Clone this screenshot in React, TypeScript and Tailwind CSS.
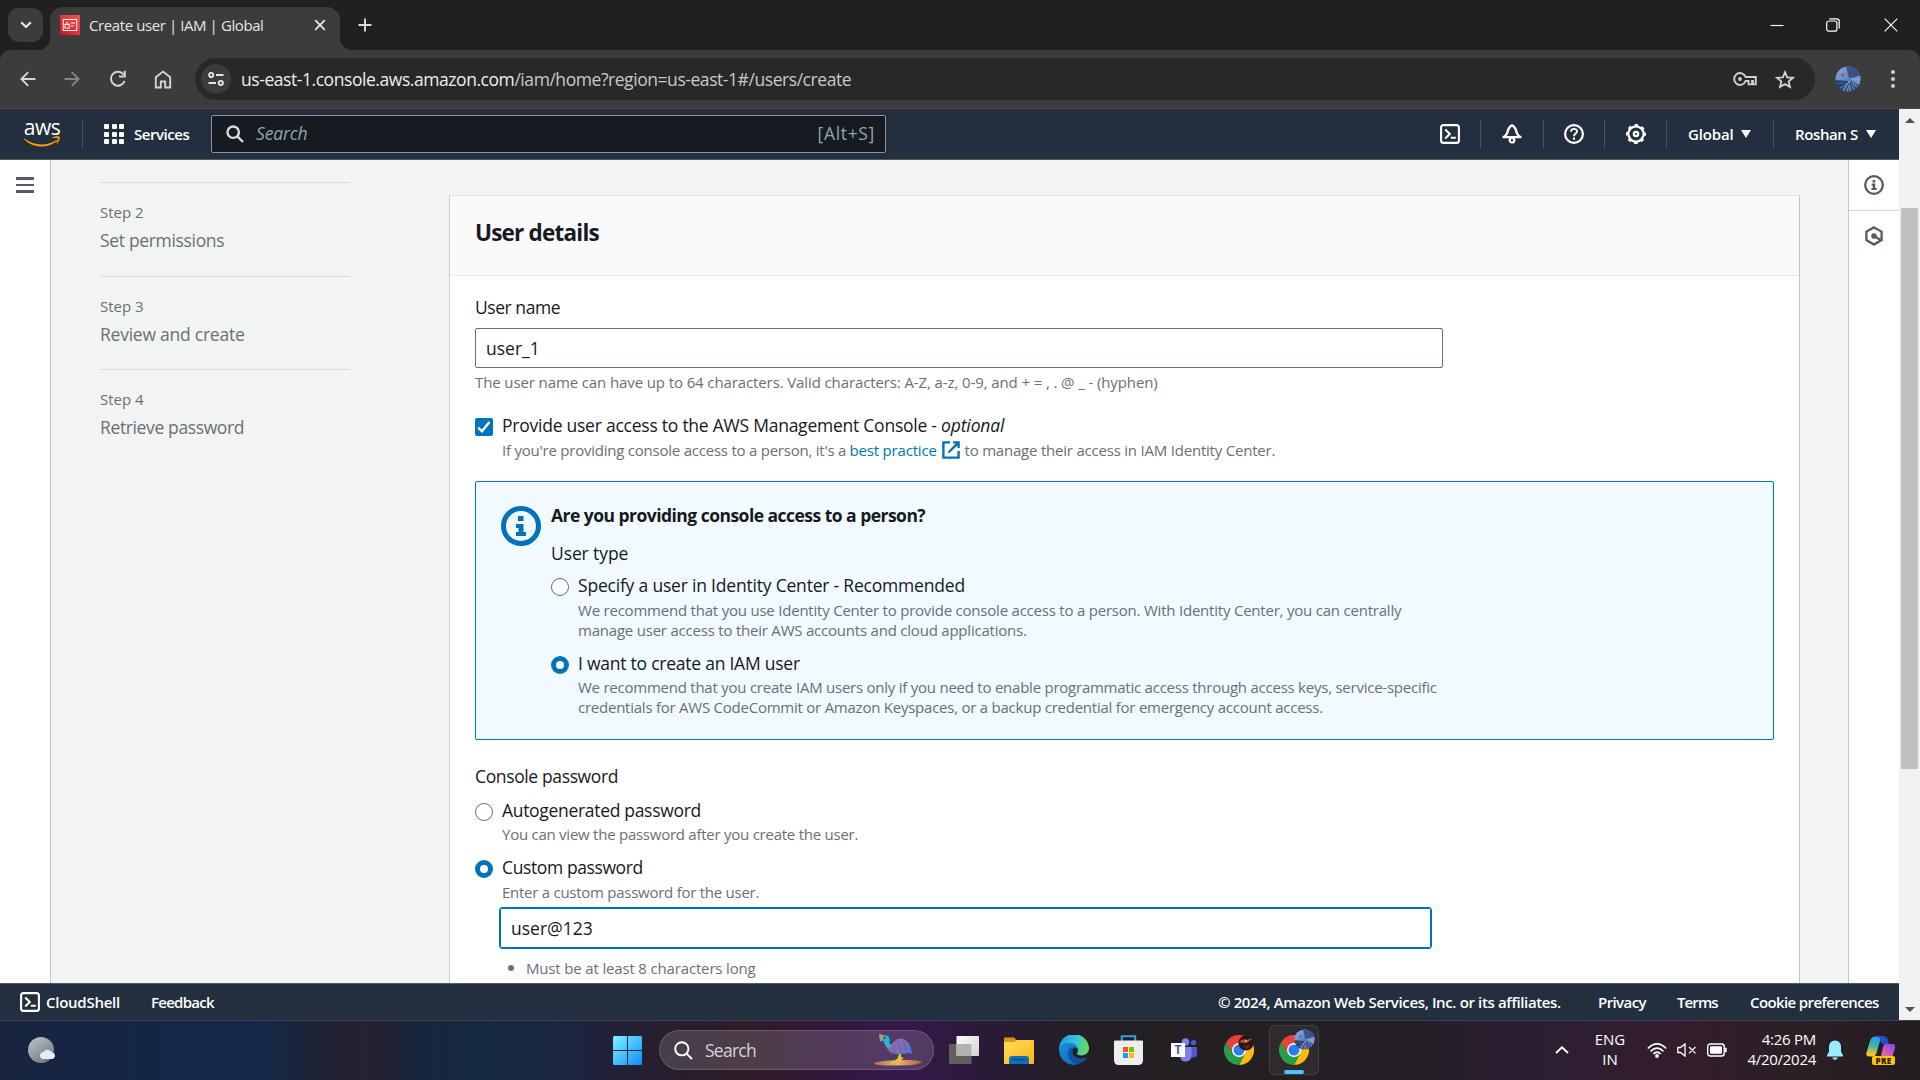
import React from "react";
import type { ReactNode } from "react";

/* ---------- browser chrome ---------- */

function Avatar({ className, id }: { className: string; id: string }) {
  return (
    <svg viewBox="0 0 26 26" className={className}>
      <defs>
        <clipPath id={id}><circle cx="13" cy="13" r="12.5" /></clipPath>
        <linearGradient id={id + "g"} x1="0" y1="0" x2="1" y2="1">
          <stop offset="0" stopColor="#8fb2e6" />
          <stop offset="0.5" stopColor="#5f82bd" />
          <stop offset="1" stopColor="#2c4272" />
        </linearGradient>
      </defs>
      <g clipPath={`url(#${id})`}>
        <rect width="26" height="26" fill={`url(#${id}g)`} />
        <path d="M11 0 L26 0 L26 11 L14 12 Z" fill="#3a5287" />
        <path d="M15 13 L26 9 L26 20 Z" fill="#7698cf" />
        <path d="M0 14 L13 15 L6 26 L0 26 Z" fill="#2a3f6e" />
        <path d="M14 16 L3 18 M14 16 L5 22 M14 16 L8 25 M14 16 L12 26 M14 16 L16 26 M14 16 L20 25 M14 16 L24 22 M16 13 L25 14" stroke="#8fb0e0" strokeWidth="0.6" />
        <path d="M13 16 L1 20 M14 17 L10 26 M15 17 L18 26 M15 16 L22 24" stroke="#1c2d57" strokeWidth="0.9" />
        <circle cx="7.5" cy="9" r="1.4" fill="#a24a48" />
      </g>
    </svg>
  );
}

function TabStrip() {
  return (
    <div className="flex h-[50px] items-end bg-[#1f2120]">
      <button className="relative z-10 mb-2 ml-2 flex h-[34px] w-[35px] items-center justify-center rounded-[11px] bg-[#3c3c3c]">
        <svg viewBox="0 0 12 8" className="h-2 w-3" fill="none" stroke="#e8e8e8" strokeWidth="2.2"><path d="M1.2 1.2 L6 6 L10.8 1.2" /></svg>
      </button>
      <div className="-ml-[5px] h-3 w-3 bg-[#3c3c3c]"><div className="h-3 w-3 rounded-br-[12px] bg-[#1f2120]" /></div>
      <div className="flex h-[43px] w-[290px] items-center rounded-t-[13px] bg-[#3c3c3c] pl-[10px]">
        <svg viewBox="0 0 20 20" className="-mt-[7px] h-5 w-5">
          <defs><linearGradient id="fav" x1="0" y1="1" x2="1" y2="0"><stop stopColor="#c7131f" /><stop offset="1" stopColor="#ff5252" /></linearGradient></defs>
          <rect width="20" height="20" fill="url(#fav)" />
          <g fill="none" stroke="#fff" strokeWidth="1">
            <rect x="3.2" y="4.5" width="13.6" height="11" />
            <rect x="5" y="9.5" width="4.2" height="3.6" />
            <path d="M5.9 9.5 V8 Q7.1 6.2 8.3 8 V9.5 M10.8 8 H15 M10.8 11 H13.5" />
          </g>
        </svg>
        <span className="-mt-[7px] ml-[9px] w-[176px] whitespace-nowrap text-[15px] font-medium leading-5 tracking-[-0.41px] text-[#e6e6e6]">Create user | IAM | Global</span>
        <svg viewBox="0 0 12 12" className="-mt-[7px] ml-[49px] h-3 w-3" stroke="#e3e3e3" strokeWidth="1.9"><path d="M1.2 1.2 L10.8 10.8 M10.8 1.2 L1.2 10.8" /></svg>
      </div>
      <div className="h-3 w-3 bg-[#3c3c3c]"><div className="h-3 w-3 rounded-bl-[12px] bg-[#1f2120]" /></div>
      <svg viewBox="0 0 14 14" className="mb-[18px] ml-[6px] h-[14px] w-[14px]" stroke="#dcdcdc" strokeWidth="1.9"><path d="M7 0.5 V13.5 M0.5 7 H13.5" /></svg>
      <div className="mb-[18px] ml-auto mr-[22px] flex items-center">
        <svg viewBox="0 0 14 14" className="h-[14px] w-[14px]" stroke="#fff" strokeWidth="1.1"><path d="M0.5 7.5 H13.5" /></svg>
        <svg viewBox="0 0 14 14" className="ml-[42px] h-[14px] w-[14px]" fill="none" stroke="#fff" strokeWidth="1.2"><rect x="0.7" y="3" width="10.2" height="10.2" rx="2" /><path d="M3.4 0.8 H10.6 Q13.2 0.8 13.2 3.4 V10.6" /></svg>
        <svg viewBox="0 0 14 14" className="ml-[44px] h-[14px] w-[14px]" stroke="#fff" strokeWidth="1.1"><path d="M0.7 0.7 L13.3 13.3 M13.3 0.7 L0.7 13.3" /></svg>
      </div>
    </div>
  );
}

function Toolbar() {
  return (
    <div className="bg-[#1f2120]">
      <div className="flex h-[59px] items-center rounded-t-[10px] border-b border-[#4b4a48] bg-[#3c3c3c]">
        <svg viewBox="0 0 16 16" className="ml-5 h-4 w-4" fill="none" stroke="#d6d6d6" strokeWidth="1.9"><path d="M15.5 8 H1.5 M8.2 1.2 L1.4 8 L8.2 14.8" /></svg>
        <svg viewBox="0 0 16 16" className="ml-[28px] h-4 w-4" fill="none" stroke="#858585" strokeWidth="1.9"><path d="M0.5 8 H14.5 M7.8 1.2 L14.6 8 L7.8 14.8" /></svg>
        <svg viewBox="0 0 18 18" className="ml-[29px] h-[18px] w-[18px]" fill="none" stroke="#d6d6d6" strokeWidth="2"><path d="M15.6 11 A7 7 0 1 1 14.8 4.8" /><path d="M15.8 0.8 V6.4 H10" /></svg>
        <svg viewBox="0 0 18 19" className="ml-[27px] h-[19px] w-[18px]" fill="none" stroke="#d6d6d6" strokeWidth="1.9"><path d="M1.8 17.5 V7.3 L9 1.6 L16.2 7.3 V17.5 H11.2 V11.5 H6.8 V17.5 Z" /></svg>
        <div className="ml-[23px] flex h-[42px] w-[1620px] items-center rounded-full bg-[#282828] pl-[6px]">
          <div className="flex h-[30px] w-[30px] items-center justify-center rounded-full bg-[#3c3c3c]">
            <svg viewBox="0 0 16 14" className="h-[14px] w-4" fill="none" stroke="#e6e6e6" strokeWidth="1.9"><circle cx="3.2" cy="3" r="2.1" /><path d="M8 3 H15.5 M0.5 11 H8" /><circle cx="12.8" cy="11" r="2.1" /></svg>
          </div>
          <div className="ml-[10px] whitespace-nowrap text-[17.5px] leading-6 tracking-[-0.44px] text-[#c9c9c9]"><span className="text-[#eeeeee]">us-east-1.console.aws.amazon.com</span>/iam/home?region=us-east-1#/users/create</div>
          <svg viewBox="0 0 24 14" className="ml-auto h-[14px] w-6" fill="none" stroke="#cfcfcf" strokeWidth="1.9"><path d="M12.6 5 A5.9 5.9 0 1 0 12.6 9 H15.6 V12.4 H19 V9 H20 V12.4 H22.8 V5 Z" /><circle cx="7" cy="7" r="1.9" fill="#cfcfcf" stroke="none" /></svg>
          <svg viewBox="0 0 20 19" className="ml-[18px] mr-5 h-[19px] w-5" fill="none" stroke="#d5d5d5" strokeWidth="1.8"><path d="M10 2.2 L12.2 7.3 L18 7.8 L13.6 11.5 L15 17 L10 14.1 L5 17 L6.4 11.5 L2 7.8 L7.8 7.3 Z" /></svg>
        </div>
        <Avatar id="av1" className="ml-5 h-[26px] w-[26px]" />
        <div className="ml-[30px] flex flex-col gap-[3px]">
          <i className="h-1 w-1 rounded-full bg-[#cfcfcf]" /><i className="h-1 w-1 rounded-full bg-[#cfcfcf]" /><i className="h-1 w-1 rounded-full bg-[#cfcfcf]" />
        </div>
      </div>
    </div>
  );
}

/* ---------- console header and footer ---------- */

function ShellIcon() {
  return (
    <svg viewBox="0 0 20 20" className="h-5 w-5" fill="none" stroke="#fff" strokeWidth="2.1"><rect x="1.1" y="1.1" width="17.8" height="17.8" rx="2.5" /><path d="M5.2 5.4 L9.8 10 L5.2 14.6 M10.8 13.7 H15.8" /></svg>
  );
}

function Divider({ className }: { className: string }) {
  return <div className={"h-7 w-px bg-[#4a535f] " + className} />;
}

function Header() {
  return (
    <header className="flex h-[51px] items-center border-b border-[#545b64] bg-[#232f3e] font-semibold text-white">
      <div className="-mt-[3px] ml-[22px] flex w-10 flex-col items-center">
        <span className="h-[19px] text-[21px] font-medium leading-[17px] tracking-[-0.4px]">aws</span>
        <svg viewBox="0 0 40 12" className="-mt-[2px] h-[11px] w-10"><path d="M0.6 2.4 C11 11 26 11 35.4 4.6 C36.4 4.2 37 5 36.2 5.8 C26 14.2 9.5 13.2 0.6 3.6 Z" fill="#ff9900" /><path d="M31.4 1.6 C34 0 38.6 0 39.3 0.9 C39.8 1.9 38.8 6.2 36.6 8.2 C36 8.6 35.8 8.2 36 7.6 C36.6 6 37.6 3.4 37 2.6 C36.4 1.9 33.6 2.2 32 2.3 C31.2 2.4 31 2 31.4 1.6 Z" fill="#ff9900" /></svg>
      </div>
      <Divider className="ml-[20px]" />
      <div className="ml-[21px] grid grid-cols-3 gap-x-[2.5px] gap-y-[2.5px]">
        {Array.from({ length: 9 }, (_, i) => <i key={i} className="h-[5px] w-[5px] rounded-[1px] bg-white" />)}
      </div>
      <span className="ml-[10px] w-[56px] text-[15px] leading-5 tracking-[-0.45px]">Services</span>
      <div className="ml-[21px] flex h-[38px] w-[675px] items-center rounded-[2px] border border-[#879596] bg-[#161a21] pl-[14px] pr-[10px] text-[17.5px] font-normal text-[#95a5a6]">
        <svg viewBox="0 0 18 18" className="h-[18px] w-[18px]" fill="none" stroke="#d9dcdc" strokeWidth="2.4"><circle cx="7.2" cy="7.2" r="5.7" /><path d="M11.4 11.4 L17 17" /></svg>
        <span className="-mt-0.5 ml-3 italic leading-6 tracking-[-0.15px]">Search</span>
        <span className="-mt-0.5 ml-auto leading-6 tracking-[0.66px]">[Alt+S]</span>
      </div>
      <div className="ml-auto"><ShellIcon /></div>
      <Divider className="ml-[20px]" />
      <svg viewBox="0 0 20 20" className="ml-[21px] h-5 w-5" fill="none" stroke="#fff" strokeWidth="2.2" strokeLinejoin="round"><path d="M10 1.2 C12.5 2.5 13.8 4.5 14.2 7 C14.6 10 16 11.5 18.6 13.2 H1.4 C4 11.5 5.4 10 5.8 7 C6.2 4.5 7.5 2.5 10 1.2 Z" /><circle cx="10" cy="16.2" r="2.3" fill="#232f3e" /></svg>
      <Divider className="ml-[21px]" />
      <svg viewBox="0 0 20 20" className="ml-[20px] h-5 w-5" fill="none" stroke="#fff" strokeWidth="2.2"><circle cx="10" cy="10" r="8.9" /><path d="M7 7.8 C7 4 13 4 13 7.6 C13 9.6 10 9.6 10 12.2 M10 13.5 V15.8" strokeWidth="1.9" /></svg>
      <Divider className="ml-[20px]" />
      <svg viewBox="0 0 20 20" className="ml-[21px] h-5 w-5" fill="none" stroke="#fff"><circle cx="10" cy="10" r="7.6" strokeWidth="2.2" /><circle cx="10" cy="10" r="9" strokeWidth="2" strokeDasharray="3.53 3.54" strokeDashoffset="1.76" /><circle cx="10" cy="10" r="2.2" strokeWidth="2.2" /></svg>
      <Divider className="ml-[20px]" />
      <span className="ml-[21px] w-[45px] text-[15px] leading-5 tracking-[-0.15px]">Global</span>
      <svg viewBox="0 0 10 8" className="ml-[8px] h-2 w-[10px]" fill="#fff"><path d="M0 0 H10 L5 8 Z" /></svg>
      <Divider className="ml-[22px]" />
      <span className="ml-[21px] w-[63px] whitespace-nowrap text-[15px] leading-5 tracking-[-0.38px]">Roshan S</span>
      <svg viewBox="0 0 10 8" className="ml-[8px] mr-[23px] h-2 w-[10px]" fill="#fff"><path d="M0 0 H10 L5 8 Z" /></svg>
    </header>
  );
}

function Footer() {
  return (
    <footer className="flex h-[37px] items-center whitespace-nowrap border-t border-[#545b64] bg-[#232f3e] text-[15px] font-semibold leading-5 text-white">
      <div className="ml-5"><ShellIcon /></div>
      <span className="ml-[6px] w-[74px] tracking-[-0.26px]">CloudShell</span>
      <span className="ml-[31px] tracking-[-0.73px]">Feedback</span>
      <span className="ml-auto w-[344px] tracking-[-0.36px]">© 2024, Amazon Web Services, Inc. or its affiliates.</span>
      <span className="ml-[36px] w-[49px] tracking-[-0.59px]">Privacy</span>
      <span className="ml-[30px] w-[42px] tracking-[-0.9px]">Terms</span>
      <span className="ml-[31px] mr-[20px] w-[129px] tracking-[-0.61px]">Cookie preferences</span>
    </footer>
  );
}

/* ---------- page ---------- */

function Step({ n, children }: { n: number; children: ReactNode }) {
  return (
    <div className="h-[93.5px] border-t border-[#d5dbdb] pt-[19px] text-[#687078]">
      <div className="text-[15px] leading-5">Step {n}</div>
      <div className="mt-[6px] text-[17.5px] leading-[25px]">{children}</div>
    </div>
  );
}

function Radio({ on }: { on?: boolean }) {
  return on ? (
    <span className="mt-[5px] h-[18px] w-[18px] shrink-0 rounded-full border-[5px] border-[#0073bb] bg-white" />
  ) : (
    <span className="mt-[5px] h-[18px] w-[18px] shrink-0 rounded-full border border-[#687078] bg-white" />
  );
}

function Option({ control, label, children }: { control: ReactNode; label: ReactNode; children: ReactNode }) {
  return (
    <div className="flex gap-[9px] whitespace-nowrap">
      {control}
      <div>
        <div className="text-[17.5px] leading-[25px] text-[#16191f]">{label}</div>
        <div className="text-[15px] leading-5 text-[#687078]">{children}</div>
      </div>
    </div>
  );
}

function InfoBox() {
  return (
    <div className="mt-[21px] flex h-[259px] w-[1299px] rounded-[2px] border border-[#0073bb] bg-[#f1faff] pl-[25px] pt-[21px]">
      <svg viewBox="0 0 40 40" className="mt-[3px] h-10 w-10" fill="#0073bb"><circle cx="20" cy="20" r="17.5" fill="none" stroke="#0073bb" strokeWidth="5" /><path d="M17 10 H22.5 V15 H17 Z M15 18 H22.5 V26 H25 V30 H15 V26 H17.5 V22 H15 Z" /></svg>
      <div className="ml-[10px] whitespace-nowrap text-[17.5px] leading-[25px] text-[#16191f]">
        <div className="font-bold tracking-[-0.53px]">Are you providing console access to a person?</div>
        <div className="mt-[13px] tracking-[-0.1px]">User type</div>
        <div className="mt-[7px]">
          <Option control={<Radio />} label={<span className="tracking-[-0.2px]">Specify a user in Identity Center - Recommended</span>}>
            <div className="mt-[2px] tracking-[-0.215px]">We recommend that you use Identity Center to provide console access to a person. With Identity Center, you can centrally<br />manage user access to their AWS accounts and cloud applications.</div>
          </Option>
        </div>
        <div className="mt-[11px]">
          <Option control={<Radio on />} label={<span className="tracking-[-0.24px]">I want to create an IAM user</span>}>
            <div className="mt-px tracking-[-0.24px]">We recommend that you create IAM users only if you need to enable programmatic access through access keys, service-specific<br />credentials for AWS CodeCommit or Amazon Keyspaces, or a backup credential for emergency account access.</div>
          </Option>
        </div>
      </div>
    </div>
  );
}

function UserDetails() {
  return (
    <section className="ml-[99px] mt-[35px] h-[800px] w-[1351px] border border-[#e3e6e6] border-l-[#c9d0d0] border-r-[#bfc7c7] bg-white">
      <div className="h-[80px] border-b border-[#eaeded] bg-[#fafafa] pl-[25px] pt-[22px]">
        <h2 className="text-[22.5px] font-bold leading-[30px] tracking-[-0.79px] text-[#16191f]">User details</h2>
      </div>
      <div className="whitespace-nowrap pl-[25px] pt-[19px] text-[17.5px] leading-[25px] text-[#16191f]">
        <div className="tracking-[-0.45px]">User name</div>
        <div className="mt-2 flex h-10 w-[968px] items-center rounded-[2px] border border-[#687078] pl-[10px]">user_1</div>
        <div className="mt-1 text-[15px] leading-5 tracking-[-0.11px] text-[#687078]">The user name can have up to 64 characters. Valid characters: A-Z, a-z, 0-9, and + = , . @ _ - (hyphen)</div>
        <div className="mt-[21px]">
          <Option
            control={
              <span className="mt-[5px] flex h-[18px] w-[18px] shrink-0 items-center justify-center rounded-[2px] bg-[#0073bb]">
                <svg viewBox="0 0 14 14" className="h-[14px] w-[14px]" fill="none" stroke="#fff" strokeWidth="2.4"><path d="M1.2 7.6 L5 11.2 L12.4 2" /></svg>
              </span>
            }
            label={<><span className="tracking-[-0.24px]">Provide user access to the AWS Management Console - </span><i className="tracking-[-0.14px]">optional</i></>}
          >
            <div className="mt-[2px] flex h-5 items-center tracking-[-0.23px]">
              <span className="w-[347.5px]">If you're providing console access to a person, it's a</span>
              <a className="w-[92px] tracking-[-0.18px] text-[#0073bb]">best practice</a>
              <svg viewBox="0 0 18 18" className="h-[18px] w-[18px]" fill="none" stroke="#0073bb" strokeWidth="2.4"><path d="M8 1.4 H1.4 V16.6 H16.6 V10 M11 1.4 H16.6 V7 M16.4 1.6 L6.5 11.5" /></svg>
              <span className="ml-[5px] tracking-[-0.21px]">to manage their access in IAM Identity Center.</span>
            </div>
          </Option>
        </div>
        <InfoBox />
        <div className="mt-6 tracking-[-0.37px]">Console password</div>
        <div className="mt-[9px]">
          <Option control={<Radio />} label={<span className="tracking-[-0.31px]">Autogenerated password</span>}>
            <div className="mt-px tracking-[-0.25px]">You can view the password after you create the user.</div>
          </Option>
        </div>
        <div className="mt-[11px]">
          <Option control={<Radio on />} label={<span className="tracking-[-0.39px]">Custom password</span>}>
            <div className="mt-[2px] tracking-[-0.26px]">Enter a custom password for the user.</div>
          </Option>
        </div>
        <div className="ml-[25px] mt-[6px] flex h-[40px] w-[931px] items-center rounded-[2px] border border-[#0073bb] bg-white pl-[10px] outline-[1.5px] outline-[#0073bb]">user@123</div>
        <ul className="ml-[50px] mt-[10px] list-none text-[15px] leading-5 tracking-[-0.16px] text-[#687078]">
          <li className="flex items-center"><i className="-ml-[17px] mr-3 h-[6px] w-[6px] rounded-full bg-[#687078]" />Must be at least 8 characters long</li>
        </ul>
      </div>
    </section>
  );
}

function Page() {
  return (
    <main className="flex h-[823px] overflow-hidden bg-[#f2f3f3]">
      <div className="w-[51px] border-r border-[#bfc8c8] bg-white pl-[16px] pt-[17px]">
        <div className="flex flex-col gap-[4px]">
          <i className="h-[2.5px] w-[18px] bg-[#545b64]" /><i className="h-[2.5px] w-[18px] bg-[#545b64]" /><i className="h-[2.5px] w-[18px] bg-[#545b64]" />
        </div>
      </div>
      <nav className="ml-[49px] w-[250px] pt-[22px]">
        <Step n={2}><span className="tracking-[-0.33px]">Set permissions</span></Step>
        <Step n={3}><span className="tracking-[-0.24px]">Review and create</span></Step>
        <Step n={4}><span className="tracking-[-0.37px]">Retrieve password</span></Step>
      </nav>
      <UserDetails />
      <aside className="ml-auto w-[51px] border-l border-[#c3cbcb] bg-white">
        <div className="flex h-[51px] items-center justify-center border-b border-[#cdd5d5]">
          <svg viewBox="0 0 20 20" className="h-5 w-5" fill="#545b64"><circle cx="10" cy="10" r="8.8" fill="none" stroke="#545b64" strokeWidth="2.3" /><path d="M8.6 5 H11.2 V7.4 H8.6 Z M7.6 8.6 H11.2 V13 H12.6 V15 H7.4 V13 H8.8 V10.6 H7.6 Z" /></svg>
        </div>
        <div className="flex h-[49px] items-center justify-center">
          <svg viewBox="0 0 20 20" className="h-5 w-5" fill="none" stroke="#545b64" strokeWidth="2.3"><path d="M10 1.4 L17.6 5.6 V14 L10 18.6 L2.4 14 V5.6 Z" /><circle cx="10" cy="10" r="2.8" fill="#545b64" stroke="none" /><path d="M10 10 L17 14.2" /></svg>
        </div>
      </aside>
    </main>
  );
}

function Scrollbar() {
  return (
    <div className="flex h-[911px] w-[21px] flex-col items-center bg-[#f1f1f1]">
      <svg viewBox="0 0 10 5" className="mt-[9px] h-[5px] w-[10px] shrink-0" fill="#505050"><path d="M5 0 L10 5 H0 Z" /></svg>
      <div className="mt-[85px] h-[561px] w-[17px] shrink-0 bg-[#c1c1c1]" />
      <svg viewBox="0 0 10 5" className="mb-[8px] mt-auto h-[5px] w-[10px] shrink-0" fill="#505050"><path d="M0 0 H10 L5 5 Z" /></svg>
    </div>
  );
}

/* ---------- taskbar ---------- */

function Bird() {
  return (
    <svg viewBox="0 0 50 32" className="h-8 w-[50px] shrink-0">
      <defs>
        <linearGradient id="bd" x1="0" y1="0" x2="1" y2="1"><stop stopColor="#6f6fd0" /><stop offset="0.5" stopColor="#8d6a9e" /><stop offset="1" stopColor="#3f7fe0" /></linearGradient>
        <linearGradient id="sd" x1="0" y1="0" x2="1" y2="0"><stop stopColor="#b9713f" /><stop offset="0.5" stopColor="#eab07a" /><stop offset="1" stopColor="#a8643c" /></linearGradient>
      </defs>
      <path d="M1 29 C10 25.5 42 25 49 27.5 C48 31 36 31.5 22 31.5 C10 31.5 0 31 1 29 Z" fill="url(#sd)" />
      <path d="M27 20 L25.5 25 L18 30 M27 20 L27 26 L24.5 29.5 M26 25 L30 24" stroke="#e8c62c" strokeWidth="2" fill="none" />
      <path d="M14 11 C18 14 20 6 26 4.5 C34 4 38 10 39 20 C35 17 33 20.5 28 20 C20 21 14 18 13 11 Z" fill="url(#bd)" />
      <path d="M24 8 L28 17 M30 7 L34 16 M20 12 L22 18" stroke="#5566c9" strokeWidth="1.2" />
      <path d="M9 3 C13 0 17 2 16.5 6 C16 9 17 10 19 12 L15 14 C12 12 11 9 10.5 7 L8 7 Z" fill="#29b5d3" />
      <path d="M6 0 L11 1 L9 6 L7 8 Z" fill="#b59572" />
      <circle cx="11.6" cy="4" r="0.9" fill="#163244" />
    </svg>
  );
}

function Chrome({ id, badge }: { id: string; badge: "brown" | "blue" }) {
  return (
    <div className="relative h-[30px] w-[30px]">
      <svg viewBox="0 0 30 30" className="h-[30px] w-[30px]">
        <path d="M15 15 L2 7.5 A15 15 0 0 1 28 7.5 Z" fill="#ea4335" />
        <path d="M15 8 L28 7.5 A15 15 0 0 1 15 30 L21 18.5 Z" fill="#fbbc04" />
        <path d="M2 7.5 L8.8 18.8 L15 15 V8 Z" fill="#ea4335" />
        <path d="M2 7.5 A15 15 0 0 0 15 30 L21 18.7 L15 21.8 L9 18.7 Z" fill="#2a9a4b" />
        <circle cx="15" cy="15" r="7" fill="#fff" />
        <circle cx="15" cy="15" r="5.5" fill="#2b7de9" />
      </svg>
      {badge === "blue" ? (
        <Avatar id={id} className="absolute -right-[6px] -top-[6px] h-[21px] w-[21px]" />
      ) : (
        <svg viewBox="0 0 16 16" className="absolute right-0 top-0 h-4 w-4"><circle cx="8" cy="8" r="7.6" fill="#2b1511" /><path d="M1 7 Q5 3 9 5 L14 3 Q11 8 6 8 Z" fill="#a8583c" /><path d="M5 11 L12 10 L10 14 Z" fill="#5a2c22" /><circle cx="8" cy="6" r="1.2" fill="#e09a62" /></svg>
      )}
    </div>
  );
}

function Taskbar() {
  return (
    <div className="flex h-[60px] items-center whitespace-nowrap border-t border-[#3d4250] bg-[linear-gradient(90deg,#18233f_0px,#122846_180px,#132848_260px,#1c2438_310px,#272130_360px,#18263c_420px,#13293f_480px,#1a2542_560px,#271e2e_660px,#2f1c28_750px,#33173e_840px,#36194c_900px,#2a1a38_980px,#241f27_1060px,#231f22_1200px,#231f25_1400px,#2a1e30_1500px,#301e31_1600px,#331d2c_1690px,#2b1f25_1800px,#241d22_1920px)] pb-px text-white">
      <svg viewBox="0 0 28 28" className="ml-7 h-7 w-7">
        <defs><linearGradient id="mn" x1="0" y1="0" x2="0.6" y2="1"><stop stopColor="#bcc5cf" /><stop offset="1" stopColor="#747f8a" /></linearGradient></defs>
        <circle cx="13" cy="14" r="13" fill="url(#mn)" />
        <path d="M14.5 23 A3.6 3.6 0 0 1 15.5 16 A5 5 0 0 1 24 16.5 A3.4 3.4 0 0 1 25 23 Z" fill="#e8ecf0" />
      </svg>
      <svg viewBox="0 0 29 29" className="ml-[557px] h-[29px] w-[29px]">
        <defs><linearGradient id="win" x1="0" y1="0" x2="1" y2="1"><stop stopColor="#7ff0ff" /><stop offset="1" stopColor="#0a8ff5" /></linearGradient></defs>
        <path d="M1 0 H14 V14 H0 V1 Z M15 0 H28 L29 1 V14 H15 Z M0 15 H14 V29 H1 L0 28 Z M15 15 H29 V28 L28 29 H15 Z" fill="url(#win)" />
      </svg>
      <div className="ml-[17px] flex h-10 w-[275px] items-center rounded-full border border-white/15 bg-white/15 pl-[14px]">
        <svg viewBox="0 0 19 19" className="h-[19px] w-[19px]" fill="none" stroke="#fff" strokeWidth="1.9"><circle cx="7.8" cy="7.8" r="6.6" /><path d="M12.6 12.6 L18 18" /></svg>
        <span className="ml-3 w-[168px] text-[17.5px] leading-6 tracking-[-0.74px] text-[#d9d3d9]">Search</span>
        <Bird />
      </div>
      <svg viewBox="0 0 30 28" className="ml-[15px] h-7 w-[30px]">
        <defs><linearGradient id="tv" x1="0" y1="0" x2="1" y2="1"><stop stopColor="#fff" /><stop offset="1" stopColor="#d2d2d2" /></linearGradient></defs>
        <rect x="0" y="8" width="22.5" height="20" rx="1" fill="#606060" /><rect x="7.5" width="22.5" height="20" rx="1" fill="url(#tv)" /><rect x="7.5" y="8" width="15" height="12" fill="#b2b2b2" />
      </svg>
      <svg viewBox="0 0 30 27" className="ml-[25px] h-[27px] w-[30px]">
        <defs><linearGradient id="fo" x1="0" y1="0" x2="1" y2="1"><stop stopColor="#ffdb62" /><stop offset="1" stopColor="#fbb80c" /></linearGradient></defs>
        <path d="M0 1.5 Q0 0.5 1 0.5 H10 L13 4 L10 7 H0 Z" fill="#dd9806" /><path d="M0 5 H10 L13 3 H29 Q30 3 30 4 V26 Q30 27 29 27 H1 Q0 27 0 26 Z" fill="url(#fo)" />
        <path d="M5 27 V22 Q5 19 8 19 H22 Q25 19 25 22 V27 Z" fill="#0f71bd" /><path d="M8.5 22.7 H21.5" stroke="#083f70" strokeWidth="1.2" />
      </svg>
      <svg viewBox="0 0 30 30" className="ml-[25px] h-[30px] w-[30px]">
        <defs>
          <linearGradient id="e1" x1="0" y1="0.3" x2="1" y2="0.4"><stop stopColor="#1f9fe0" /><stop offset="0.55" stopColor="#34c2d8" /><stop offset="1" stopColor="#67e04c" /></linearGradient>
          <linearGradient id="e2" x1="0" y1="0" x2="1" y2="1"><stop stopColor="#1a8fe3" /><stop offset="1" stopColor="#0b67b8" /></linearGradient>
        </defs>
        <path d="M0 15 A15 15 0 0 1 30 13 C30 18 26 20.5 22 20.5 C18.5 20.5 17.5 19 18.3 17.8 C20.5 14 17 10 12 10 C6 10 1 13 0 15 Z" fill="url(#e1)" />
        <path d="M0 15 C1 10 6 7.5 11 8 C16 8.5 18.5 11 19 14 C14 10 9.5 15 11 20.5 C12.5 26 17 29 20.5 28.7 A15 15 0 0 1 0 15 Z" fill="url(#e2)" />
        <path d="M12 12.5 C8 15 8 21 11.5 25.5 C14 28.5 18 29.6 20.5 28.7 C24 27.6 27 24.6 28 22.8 C28.2 22 27.6 21.8 27 22.2 C21 25 13.5 22.5 13.6 16.5 C13.7 14.5 14.5 13.3 15.3 12.7 Z" fill="#124f9c" />
      </svg>
      <svg viewBox="0 0 29 30" className="ml-[25px] h-[30px] w-[29px]">
        <path d="M7.8 6 V1.3 H21.2 V6" fill="none" stroke="#27a7e8" strokeWidth="2" /><path d="M1 5.5 H28 Q29 5.5 29 6.5 V25 Q29 30 24 30 H5 Q0 30 0 25 V6.5 Q0 5.5 1 5.5 Z" fill="#eeeeee" />
        <rect x="9" y="12" width="5" height="5" fill="#f35325" /><rect x="15" y="12" width="5" height="5" fill="#81bc06" /><rect x="9" y="18" width="5" height="5" fill="#05a6f0" /><rect x="15" y="18" width="5" height="5" fill="#ffba08" />
      </svg>
      <div className="relative ml-[28px] h-[24px] w-[26px]">
        <svg viewBox="0 0 26 24" className="h-6 w-[26px]">
          <circle cx="14.5" cy="4" r="3.8" fill="#7b83eb" /><circle cx="22.5" cy="4.6" r="2.7" fill="#5059c9" /><path d="M18 9 H26 V16 Q26 19.5 22 19.5 H18 Z" fill="#5059c9" /><path d="M9 9 H20.5 V17 Q20.5 23.5 14.8 23.5 Q9.5 23.5 9 18 Z" fill="#7b83eb" /><rect y="5" width="14" height="14" fill="#fff" />
        </svg>
        <span className="absolute left-0 top-[5px] w-[14px] text-center text-[12px] font-bold leading-[14px] text-[#4b53bc]">T</span>
      </div>
      <div className="ml-[27px]"><Chrome id="av2" badge="brown" /></div>
      <div className="relative ml-[15px] flex h-[50px] w-[50px] items-center justify-center rounded-[6px] border border-white/10 bg-white/5">
        <Chrome id="av3" badge="blue" />
        <i className="absolute bottom-0 left-[14px] h-[4px] w-5 rounded-full bg-[#4cc2ff]" />
      </div>
      <svg viewBox="0 0 14 8" className="ml-auto h-2 w-[14px]" fill="none" stroke="#fff" strokeWidth="1.9"><path d="M1 7 L7 1.3 L13 7" /></svg>
      <div className="-mt-[2px] ml-[22px] w-[38px] text-center text-[15px] leading-5"><div className="tracking-[-0.06px]">ENG</div><div>IN</div></div>
      <svg viewBox="0 0 20 15" className="ml-[18px] h-[15px] w-5" fill="none" stroke="#fff" strokeWidth="1.6"><path d="M0.8 5.5 Q10 -3.6 19.2 5.5 M3.6 8.4 Q10 2 16.4 8.4 M6.3 11 Q10 7.2 13.7 11" /><circle cx="10" cy="13" r="1.9" fill="#fff" stroke="none" /></svg>
      <svg viewBox="0 0 20 14" className="ml-[10px] h-[14px] w-5" fill="none" stroke="#fff" strokeWidth="1.3"><path d="M0.8 4.5 H3.5 L8 0.9 V13.1 L3.5 9.5 H0.8 Z M12 4 L18.5 10.4 M18.5 4 L12 10.4" /></svg>
      <svg viewBox="0 0 20 14" className="ml-[10px] h-[14px] w-5" fill="none" stroke="#fff" strokeWidth="1.4"><rect x="0.7" y="1" width="16.5" height="12" rx="2.5" /><rect x="3" y="3.2" width="12" height="7.6" rx="1" fill="#fff" stroke="none" /><path d="M18.8 4.8 V9.2" strokeWidth="1.8" /></svg>
      <div className="-mt-[3px] ml-[19px] w-[70px] text-right text-[15px] leading-5 tracking-[-0.27px]"><div>4:26 PM</div><div>4/20/2024</div></div>
      <svg viewBox="0 0 16 20" className="ml-[11px] h-5 w-4" fill="#99ebff"><path d="M8 0.5 C12 0.5 14 3.5 14 7 V11.5 L16 15.5 V16.5 H0 V15.5 L2 11.5 V7 C2 3.5 4 0.5 8 0.5 Z M5.2 17.5 H10.8 Q10.4 19.8 8 19.8 Q5.6 19.8 5.2 17.5 Z" /></svg>
      <div className="relative ml-[23px] mr-[25px] h-[29px] w-[29px]">
        <svg viewBox="0 0 29 29" className="h-[29px] w-[29px]">
          <defs>
            <linearGradient id="c1" x1="0.5" y1="0" x2="0.3" y2="1"><stop stopColor="#2a9cf0" /><stop offset="0.45" stopColor="#35b8a8" /><stop offset="0.9" stopColor="#f6c52f" /></linearGradient>
            <linearGradient id="c2" x1="0.8" y1="0" x2="0.3" y2="1"><stop stopColor="#8a4be8" /><stop offset="0.5" stopColor="#d35bb8" /><stop offset="1" stopColor="#f58a5a" /></linearGradient>
          </defs>
          <path d="M9 0.5 H18 Q14 3 12.5 10 L10.5 17 Q9.5 20.5 6 20.5 H3 Q-0.5 20.5 0.5 16.5 L4 5 Q5.5 0.5 9 0.5 Z" fill="url(#c1)" />
          <path d="M12 0.5 H18 Q21 0.5 22 4.5 L23 8 H18 Q15 8 14 3 Z" fill="#1d50d8" />
          <path d="M19 8 H26 Q30 8 29 12 L26.5 20 Q25 26 20 26 H12 Q14 24 15 20 L17 11 Q17.6 8 19 8 Z" fill="url(#c2)" />
        </svg>
        <span className="absolute bottom-0 left-[6px] h-[9px] w-[23px] rounded-[2px] bg-[#ffc400] text-center text-[8px] font-extrabold leading-[9px] tracking-[0.4px] text-[#241c00]">PRE</span>
      </div>
    </div>
  );
}

export default function App() {
  return (
    <div className="h-[1080px] w-[1920px] overflow-hidden bg-[#1f2120] font-['Open_Sans','Noto_Sans',sans-serif]">
      <TabStrip />
      <Toolbar />
      <div className="flex h-[911px]">
        <div className="w-[1899px]">
          <Header />
          <Page />
          <Footer />
        </div>
        <Scrollbar />
      </div>
      <Taskbar />
    </div>
  );
}
